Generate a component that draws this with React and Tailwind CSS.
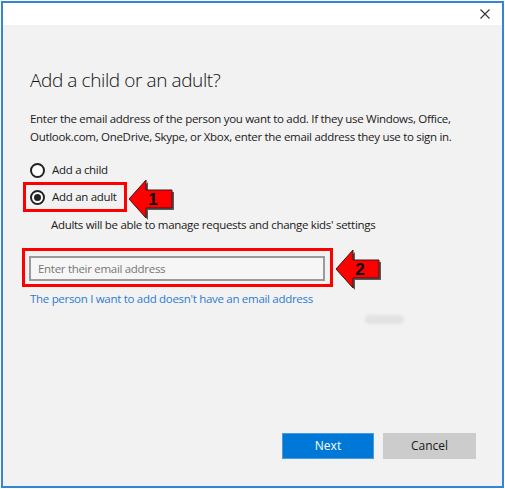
import React from "react";

function Arrow({ n }) {
  return (
    <svg width="46" height="40" viewBox="0 0 46 40" className="shrink-0">
      <polygon points="2,20 19,1 19,11 45,11 45,29 19,29 19,39" fill="#5a5a5a" transform="translate(1,1)" />
      <polygon points="1,19 18,0 18,10 44,10 44,28 18,28 18,38" fill="#ff0000" stroke="#3a1a1a" strokeWidth="1" />
      <text x="25" y="25" textAnchor="middle" fontFamily="Liberation Sans, Arial, sans-serif" fontWeight="700" fontSize="17" fill="#000">{n}</text>
    </svg>
  );
}

export default function App() {
  const font = { fontFamily: '"Open Sans", "Noto Sans", sans-serif' };
  const t = "text-[11.5px] tracking-[-0.3px] text-[#1a1a1a]";
  return (
    <div className="w-[505px] h-[489px] bg-white p-[1px]" style={font}>
      <div className="w-full h-full border-2 border-[#3585d6] flex flex-col bg-[#f2f2f2]">
        <div className="h-[22px] bg-white flex justify-end items-center pr-[12px] shrink-0">
          <svg width="10" height="10" viewBox="0 0 10 10">
            <path d="M0.5 0.5 L9.5 9.5 M9.5 0.5 L0.5 9.5" stroke="#333" strokeWidth="1.1" />
          </svg>
        </div>
        <div className="flex-1 flex flex-col pl-[27px] pr-[26px]">
          <h1 className="mt-[41px] text-[19px] leading-[28px] font-light text-[#111] tracking-[-0.4px]">Add a child or an adult?</h1>
          <p className={"mt-[16px] leading-[18px] " + t}>
            Enter the email address of the person you want to add. If they use Windows, Office, Outlook.com, OneDrive, Skype, or Xbox, enter the email address they use to sign in.
          </p>
          <div className="mt-[12px] flex items-center h-[24px]">
            <span className="w-[15px] h-[15px] rounded-full border-2 border-[#222] bg-white shrink-0" />
            <span className={"ml-[7px] " + t}>Add a child</span>
          </div>
          <div className="flex items-start h-[30px] ml-[-7px]">
            <div className="border-[3px] border-[#ff0000] w-[104px] h-[30px] flex items-center pl-[4px] shrink-0">
              <span className="w-[15px] h-[15px] rounded-full border-2 border-[#222] bg-white shrink-0 flex items-center justify-center">
                <span className="w-[7px] h-[7px] rounded-full bg-[#222]" />
              </span>
              <span className={"ml-[7px] " + t}>Add an adult</span>
            </div>
            <div className="ml-[1px] mt-[-2px]"><Arrow n="1" /></div>
          </div>
          <p className={"mt-[4px] ml-[21px] leading-[18px] " + t}>Adults will be able to manage requests and change kids' settings</p>
          <div className="mt-[14px] flex items-start h-[39px] ml-[-8px]">
            <div className="border-[3px] border-[#ff0000] w-[311px] h-[39px] pl-[4px] pt-[5px] shrink-0">
              <div className="w-[296px] h-[25px] border-2 border-[#9a9a9a] bg-[#f6f6f6] flex items-center pl-[7px] text-[11.5px] tracking-[-0.3px] text-[#767676]">
                Enter their email address
              </div>
            </div>
            <div className="ml-[2px] mt-[2px]"><Arrow n="2" /></div>
          </div>
          <a className="mt-[3px] text-[11.5px] tracking-[-0.3px] leading-[18px] text-[#2e7ad1]">The person I want to add doesn't have an email address</a>
          <div className="mt-[7px] ml-[335px] w-[39px] h-[9px] rounded-full bg-[#e2e2e2] blur-[1.5px]" />
          <div className="mt-auto mb-[27px] flex justify-end gap-[9px]">
            <button className="w-[92px] h-[26px] bg-[#0078d7] border border-[#4a9ae0] text-white text-[12px]">Next</button>
            <button className="w-[93px] h-[26px] bg-[#cccccc] text-[#1a1a1a] text-[12px]">Cancel</button>
          </div>
        </div>
      </div>
    </div>
  );
}
